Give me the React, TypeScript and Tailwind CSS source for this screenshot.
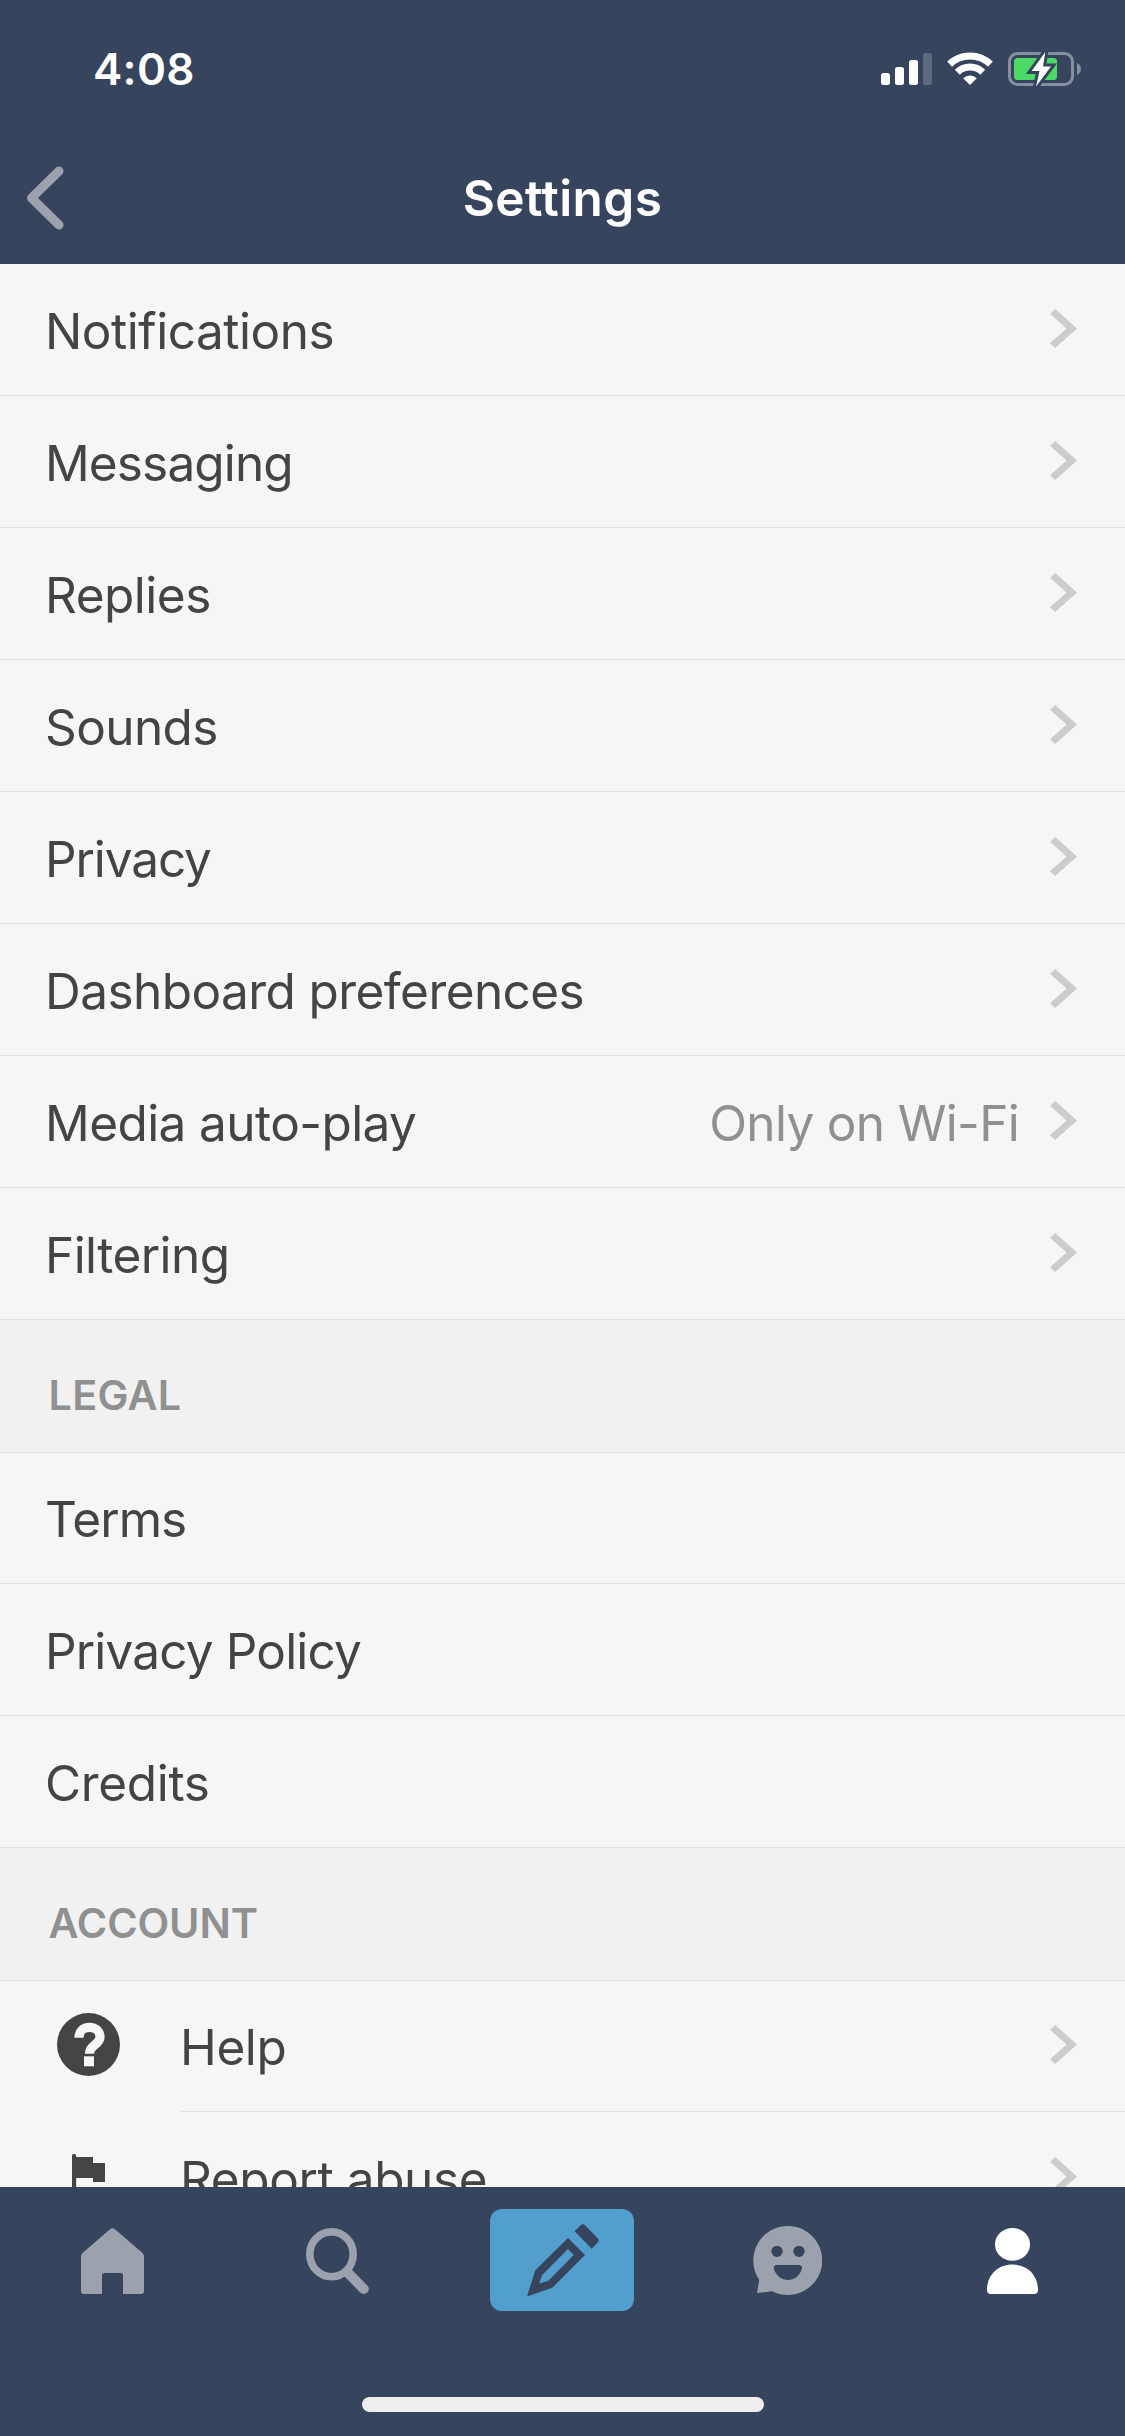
import type { ReactNode } from "react";

type Row = {
  label: string;
  tracking: string;
  height: string;
  value?: string;
  icon?: ReactNode;
  arrow?: boolean;
};

const TALL = "h-[132px] pt-[3px]";
const SHORT = "h-[131px] pt-[2px]";

const general: Row[] = [
  { label: "Notifications", tracking: "tracking-[-0.46px]", height: TALL, arrow: true },
  { label: "Messaging", tracking: "tracking-[-0.86px]", height: TALL, arrow: true },
  { label: "Replies", tracking: "tracking-[-0.5px]", height: TALL, arrow: true },
  { label: "Sounds", tracking: "tracking-[-0.6px]", height: TALL, arrow: true },
  { label: "Privacy", tracking: "tracking-[-1.1px]", height: TALL, arrow: true },
  { label: "Dashboard preferences", tracking: "tracking-[-0.57px]", height: TALL, arrow: true },
  { label: "Media auto-play", tracking: "tracking-[-0.58px]", height: TALL, value: "Only on Wi-Fi", arrow: true },
  { label: "Filtering", tracking: "tracking-[-0.55px]", height: TALL, arrow: true },
];

const legal: Row[] = [
  { label: "Terms", tracking: "tracking-[-0.9px]", height: SHORT },
  { label: "Privacy Policy", tracking: "tracking-[-0.83px]", height: TALL },
  { label: "Credits", tracking: "tracking-[-0.35px]", height: TALL },
];

const account: Row[] = [
  { label: "Help", tracking: "tracking-[-0.4px]", height: SHORT, icon: <HelpIcon />, arrow: true },
  { label: "Report abuse", tracking: "tracking-[-0.39px]", height: TALL, icon: <FlagIcon />, arrow: true },
];

function HelpIcon() {
  return (
    <svg className="mb-[6px] ml-[57px] h-[63px] w-[63px]" viewBox="0 0 63 63" fill="none">
      <circle cx="31.5" cy="31.5" r="31.5" fill="#444444" />
      <path d="M22 24.7C22 18 26.5 14.3 32.4 14.3C38.5 14.3 43 18.3 43 24C43 32 32.5 31.5 32.5 40.7" stroke="#f6f6f6" strokeWidth="9.2" />
      <rect x="27" y="43.3" width="10" height="10" fill="#f6f6f6" />
    </svg>
  );
}

function FlagIcon() {
  return (
    <svg className="mt-[6px] ml-[72px] h-[57px] w-[33px]" viewBox="0 0 33 57" fill="#444444">
      <path d="M0 2a2.1 2.1 0 0 1 4.2 0V3H21V9H33V28H21V24H4.2V57H0Z" />
    </svg>
  );
}

function Chevron() {
  return (
    <svg className="mr-12 mb-[5px] h-[39px] w-[27px] shrink-0" viewBox="0 0 27 39" fill="#cccccc">
      <path d="M0 4.7L5.2 0L27 19.5L5.2 39L0 34.3L16.5 19.5Z" />
    </svg>
  );
}

function SettingsRow({ row }: { row: Row }) {
  return (
    <li className="flex">
      {row.icon && <div className={`flex w-[180px] shrink-0 items-center ${row.height}`}>{row.icon}</div>}
      <div className={`flex flex-1 items-center border-b border-[#e4e4e4] ${row.height} ${row.icon ? "" : "pl-[45px]"}`}>
        <span className={`flex-1 text-[49.5px] leading-[60px] text-[#444444] ${row.tracking}`}>{row.label}</span>
        {row.value && (
          <span className="mr-[31px] text-[49.5px] leading-[60px] tracking-[-0.68px] text-[#909090]">{row.value}</span>
        )}
        {row.arrow && <Chevron />}
      </div>
    </li>
  );
}

function Section({ title, tracking, rows }: { title?: string; tracking?: string; rows: Row[] }) {
  return (
    <section>
      {title && (
        <h2 className={`flex h-[133px] items-center border-b border-[#e4e4e4] bg-[#f1f1f1] pt-[18px] pl-[48.5px] text-[41.3px] leading-[50px] font-semibold text-[#909090] ${tracking}`}>
          {title}
        </h2>
      )}
      <ul>
        {rows.map((row) => (
          <SettingsRow key={row.label} row={row} />
        ))}
      </ul>
    </section>
  );
}

function StatusIcons() {
  return (
    <svg className="h-[36px] w-[202px]" viewBox="880 51 202 36" fill="none">
      <rect x="881" y="73" width="9" height="12" rx="2.5" fill="#fff" />
      <rect x="895" y="67" width="9" height="18" rx="2.5" fill="#fff" />
      <rect x="909" y="60" width="9" height="25" rx="2.5" fill="#fff" />
      <rect x="923" y="53" width="9" height="32" rx="2.5" fill="#5e6b7f" />
      <g stroke="#fff" strokeWidth="7">
        <path d="M949.6 64.1A29.5 29.5 0 0 1 990.4 64.1" />
        <path d="M957.3 72.2A18.4 18.4 0 0 1 982.7 72.2" />
      </g>
      <path d="M970 85L963.2 78.2A9.8 9.8 0 0 1 976.8 78.2Z" fill="#fff" />
      <rect x="1009.5" y="53.5" width="63" height="31" rx="8" stroke="#868fa0" strokeWidth="3" />
      <path d="M1077 63C1082.3 65.5 1082.3 72.5 1077 75Z" fill="#868fa0" />
      <rect x="1014" y="58" width="43" height="22" rx="3.5" fill="#4cd964" />
      <path d="M1045.3 52L1031.7 71H1039.5L1036 86.5L1051 66.500H1043Z" fill="#fff" stroke="#36455d" strokeWidth="6" paintOrder="stroke" />
    </svg>
  );
}

function HomeIcon() {
  return (
    <svg className="h-[66px] w-[63px]" viewBox="0 0 63 66" fill="#9ba1ad">
      <path d="M29 1.2Q31.5 -0.7 34 1.2L61.5 25Q63 26.5 63 28.5V63Q63 66 60 66H42V47.5Q42 45 39.5 45H23.5Q21 45 21 47.5V66H3Q0 66 0 63V28.5Q0 26.5 1.5 25Z" />
    </svg>
  );
}

function SearchIcon() {
  return (
    <svg className="h-[66px] w-[63px]" viewBox="0 0 63 66" fill="none" stroke="#9ba1ad">
      <ellipse cx="25.5" cy="26.3" rx="21.7" ry="22.4" strokeWidth="7.6" />
      <path d="M42 45L57.8 61" strokeWidth="10" strokeLinecap="round" />
    </svg>
  );
}

function ComposeButton() {
  return (
    <div className="mr-[2px] mb-[2px] h-[102px] w-[144px] rounded-[12px] bg-[#529ecd]">
      <svg className="h-[102px] w-[144px]" viewBox="0 0 144 102" fill="#36455d">
        <path fillRule="evenodd" d="M37 87.5L45.3 61.3L78 29L95 46L62.3 78.7ZM49.3 74.5L58.3 71.7L83.7 46L78 40L52 66.3Z" />
        <path d="M84.7 22.3L90.5 16.500Q92.900 14.100 95.3 16.5L107.3 28.7Q110 31.4 107.3 34.1L101.7 39.7Z" />
      </svg>
    </div>
  );
}

function ChatIcon() {
  return (
    <svg className="h-[69px] w-[69px]" viewBox="0 0 69 69" fill="#9ba1ad">
      <path d="M34.5 0A34.5 34.5 0 1 1 19 65.200L4 67L6.2 53.800A34.5 34.5 0 0 1 34.5 0Z" />
      <g fill="#36455d">
        <circle cx="24" cy="25.3" r="5.6" />
        <circle cx="46" cy="25.3" r="5.6" />
        <path d="M24 39H45.800Q49.6 39 48.9 43C46.5 50 41 54 34.9 54S23.3 50 20.9 43Q20.2 39 24 39Z" />
      </g>
    </svg>
  );
}

function PersonIcon() {
  return (
    <svg className="h-[66px] w-[51px]" viewBox="0 0 51 66" fill="#fff">
      <ellipse cx="25.5" cy="16.4" rx="17.5" ry="16.4" />
      <path d="M0 62C0 47 11 36.6 25.5 36.6S51 47 51 62Q51 66 47 66H4Q0 66 0 62Z" />
    </svg>
  );
}

export default function App() {
  return (
    <div className="flex h-[2436px] w-[1125px] flex-col overflow-hidden bg-[#f6f6f6] font-['Inter',sans-serif]">
      <header className="h-[264px] shrink-0 bg-[#36455d] text-white">
        <div className="flex h-[132px] items-center justify-between pt-[6px] pr-[43px] pl-[93px]">
          <span className="text-[44px] leading-[54px] font-semibold tracking-[0.3px]">4:08</span>
          <StatusIcons />
        </div>
        <div className="grid h-[132px] grid-cols-[1fr_auto_1fr] items-center">
          <svg className="ml-[25.5px] h-[64px] w-[38px]" viewBox="0 0 38 64" fill="none" stroke="#9ba1ad" strokeWidth="9" strokeLinecap="round" strokeLinejoin="round">
            <path d="M33 5L5.5 32L33 59" />
          </svg>
          <h1 className="text-[49.5px] leading-[60px] font-semibold tracking-[0.42px]">Settings</h1>
        </div>
      </header>

      <main className="min-h-0 flex-1 overflow-hidden">
        <Section rows={general} />
        <Section title="LEGAL" tracking="tracking-[0.3px]" rows={legal} />
        <Section title="ACCOUNT" tracking="tracking-[-0.1px]" rows={account} />
      </main>

      <nav className="flex h-[249px] shrink-0 flex-col items-center justify-between bg-[#36455d] pb-6">
        <div className="grid h-[147px] w-full grid-cols-5 place-items-center">
          <HomeIcon />
          <SearchIcon />
          <ComposeButton />
          <ChatIcon />
          <PersonIcon />
        </div>
        <div className="h-[15px] w-[402px] rounded-full bg-[#eeeeee]" />
      </nav>
    </div>
  );
}
